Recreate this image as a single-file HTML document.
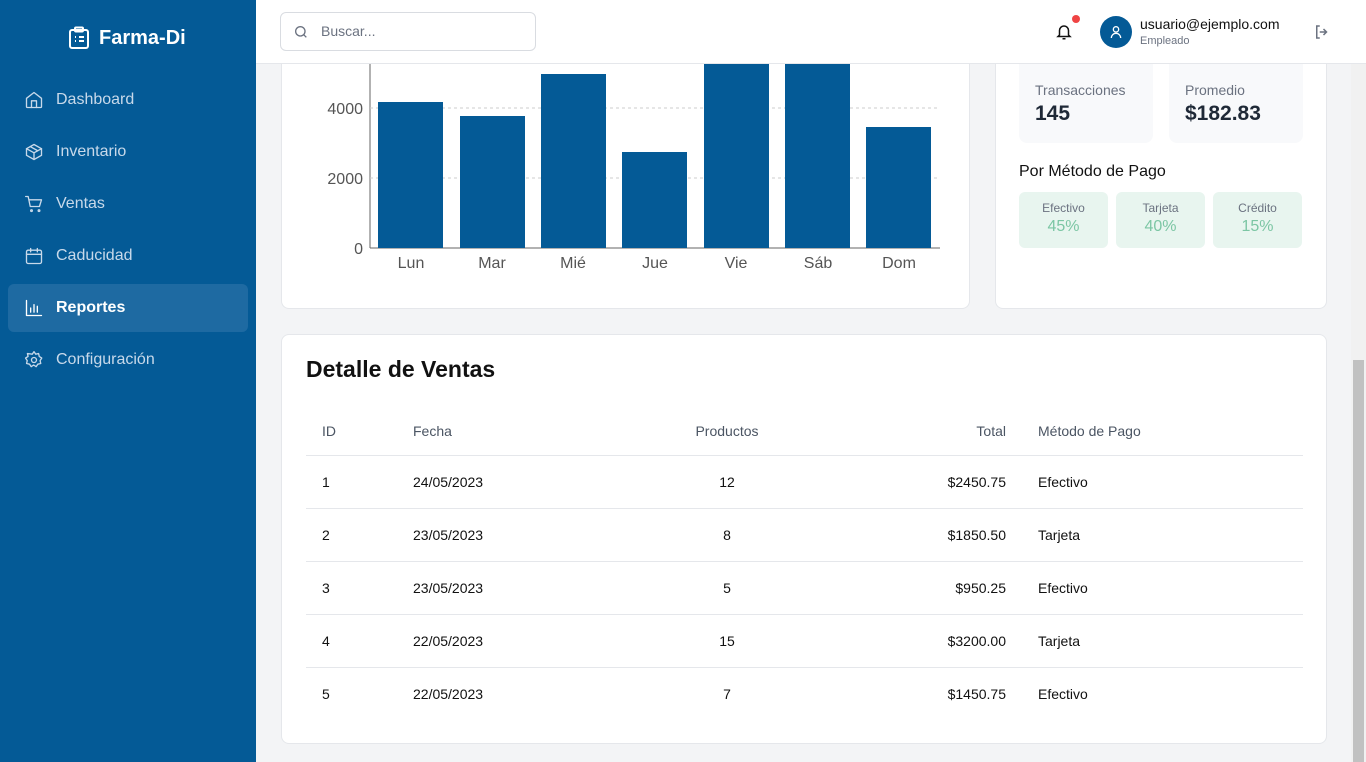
<!DOCTYPE html>
<html><head><meta charset="utf-8"><style>
*{box-sizing:border-box;margin:0;padding:0}
body{width:1366px;height:762px;overflow:hidden;background:#f3f4f6;font-family:"Liberation Sans",sans-serif;position:relative;color:#111}
.side{position:absolute;left:0;top:0;width:256px;height:762px;background:#045a96}
.logo{position:absolute;left:68px;top:26px;color:#fff;font-weight:bold;font-size:20px;display:flex;align-items:center;gap:9px}
.nav{position:absolute;left:8px;width:240px;height:48px;border-radius:6px;color:#c8d9ea;font-size:16px;display:flex;align-items:center;padding-left:16px;gap:12px}
.nav.act{background:#1e6aa2;color:#fff;font-weight:bold}
.nav svg{width:20px;height:20px;fill:none;stroke:currentColor;stroke-width:1.6;stroke-linecap:round;stroke-linejoin:round}
.top{position:absolute;left:256px;top:0;right:0;height:64px;background:#fff;border-bottom:1px solid #e5e7eb}
.search{position:absolute;left:24px;top:12px;width:256px;height:39px;border:1px solid #d9dce1;border-radius:6px;color:#6b7280;font-size:14px;padding:10px 0 0 40px}
.card{position:absolute;background:#fff;border:1px solid #e5e7eb;border-radius:8px}
.stat{position:absolute;top:64px;width:134px;height:79px;background:#f8f9fb;border-radius:0 0 8px 8px;padding:18px 16px}
.stat .l{font-size:14px;color:#6b7280}.stat .v{font-size:21px;font-weight:bold;color:#1f2937;margin-top:4px}
.pm{position:absolute;top:192px;width:89px;height:56px;background:#e8f5ef;border-radius:6px;text-align:center;padding-top:9px}
.pm .l{font-size:12px;color:#6b7280}.pm .v{font-size:16px;color:#7cc6a4;margin-top:3px}
table{position:absolute;left:24px;top:72px;width:997px;border-collapse:collapse;font-size:14px}
th{font-weight:normal;color:#4b5563;height:48px;text-align:left;padding-left:16px;border-bottom:1px solid #e5e7eb}
td{height:53px;padding-left:16px;border-bottom:1px solid #e5e7eb;color:#111}
tr:last-child td{border-bottom:none}
.c{text-align:center;padding:0}.r{text-align:right;padding:0 16px 0 0}
</style></head><body>
<div class="side">
<div class="logo"><svg width="22" height="24" viewBox="0 0 22 24" fill="none" stroke="#fff" stroke-width="2" stroke-linejoin="round"><rect x="2" y="4" width="18" height="18" rx="2"/><rect x="7" y="1.5" width="8" height="4" rx="1"/><path d="M7 11h1M11 11h5M7 15h1M11 15h5"/></svg>Farma-Di</div>
<div class="nav" style="top:76px"><svg viewBox="0 0 24 24"><path d="M3 10l9-7 9 7v10a1 1 0 0 1-1 1H4a1 1 0 0 1-1-1z"/><path d="M9 21v-8h6v8"/></svg>Dashboard</div>
<div class="nav" style="top:128px"><svg viewBox="0 0 24 24"><path d="M21 8l-9-5-9 5v8l9 5 9-5z"/><path d="M3 8l9 5 9-5M12 13v8M7.5 5.5l9 5"/></svg>Inventario</div>
<div class="nav" style="top:180px"><svg viewBox="0 0 24 24"><path d="M2 3h3l2.5 12h11L21 7H6"/><circle cx="9" cy="20" r="1"/><circle cx="18" cy="20" r="1"/></svg>Ventas</div>
<div class="nav" style="top:232px"><svg viewBox="0 0 24 24"><rect x="3" y="5" width="18" height="16" rx="2"/><path d="M3 10h18M8 3v4M16 3v4"/></svg>Caducidad</div>
<div class="nav act" style="top:284px"><svg viewBox="0 0 24 24"><path d="M3 3v18h18M8 17v-5M12 17V8M16 17v-7"/></svg>Reportes</div>
<div class="nav" style="top:336px"><svg viewBox="0 0 24 24"><circle cx="12" cy="12" r="3"/><path d="M12 2l2 3 3.5-.8.8 3.5 3 2-2 3 .8 3.5-3.5.8-2 3-3-2-3 2-2-3-3.5-.8.8-3.5-2-3 3-2-.8-3.5L10 5z"/></svg>Configuración</div>
</div>

<div class="card" style="left:281px;top:40px;width:689px;height:269px;border-top:none">
<svg width="689" height="269" style="position:absolute;left:-1px;top:0" font-family="Liberation Sans" font-size="16" fill="#555">
<line x1="89" y1="24" x2="89" y2="208" stroke="#666"/>
<line x1="89" y1="208" x2="659" y2="208" stroke="#666"/>
<line x1="89" y1="68" x2="659" y2="68" stroke="#ccc" stroke-dasharray="3 3"/>
<line x1="89" y1="138" x2="659" y2="138" stroke="#ccc" stroke-dasharray="3 3"/>
<g fill="#045a96"><rect x="97" y="62" width="65" height="146"/><rect x="179" y="76" width="65" height="132"/><rect x="260" y="34" width="65" height="174"/><rect x="341" y="112" width="65" height="96"/><rect x="423" y="10" width="65" height="198"/><rect x="504" y="10" width="65" height="198"/><rect x="585" y="87" width="65" height="121"/></g>
<g text-anchor="end"><text x="82" y="74">4000</text><text x="82" y="144">2000</text><text x="82" y="214">0</text></g>
<g text-anchor="middle"><text x="130" y="228">Lun</text><text x="211" y="228">Mar</text><text x="292" y="228">Mié</text><text x="374" y="228">Jue</text><text x="455" y="228">Vie</text><text x="537" y="228">Sáb</text><text x="618" y="228">Dom</text></g>
</svg></div>

<div class="card" style="left:995px;top:40px;width:332px;height:269px;border-top:none"></div>
<div class="stat" style="left:1019px"><div class="l">Transacciones</div><div class="v">145</div></div>
<div class="stat" style="left:1169px"><div class="l">Promedio</div><div class="v">$182.83</div></div>
<div style="position:absolute;left:1019px;top:163px;font-size:16px;color:#111">Por Método de Pago</div>
<div class="pm" style="left:1019px"><div class="l">Efectivo</div><div class="v">45%</div></div>
<div class="pm" style="left:1116px"><div class="l">Tarjeta</div><div class="v">40%</div></div>
<div class="pm" style="left:1213px"><div class="l">Crédito</div><div class="v">15%</div></div>

<div class="card" style="left:281px;top:334px;width:1046px;height:410px">
<div style="position:absolute;left:24px;top:21px;font-size:23px;font-weight:bold">Detalle de Ventas</div>
<table>
<tr><th style="width:91px">ID</th><th style="width:270px">Fecha</th><th class="c" style="width:120px">Productos</th><th class="r" style="width:235px">Total</th><th>Método de Pago</th></tr>
<tr><td>1</td><td>24/05/2023</td><td class="c">12</td><td class="r">$2450.75</td><td>Efectivo</td></tr>
<tr><td>2</td><td>23/05/2023</td><td class="c">8</td><td class="r">$1850.50</td><td>Tarjeta</td></tr>
<tr><td>3</td><td>23/05/2023</td><td class="c">5</td><td class="r">$950.25</td><td>Efectivo</td></tr>
<tr><td>4</td><td>22/05/2023</td><td class="c">15</td><td class="r">$3200.00</td><td>Tarjeta</td></tr>
<tr><td>5</td><td>22/05/2023</td><td class="c">7</td><td class="r">$1450.75</td><td>Efectivo</td></tr>
</table></div>

<div class="top">
<div class="search"><svg width="16" height="16" viewBox="0 0 24 24" fill="none" stroke="#6b7280" stroke-width="2" style="position:absolute;left:12px;top:11px"><circle cx="11" cy="11" r="7"/><path d="M20 20l-4-4"/></svg>Buscar...</div>
<svg width="18" height="18" viewBox="0 0 24 24" fill="none" stroke="#111" stroke-width="2" style="position:absolute;left:799px;top:23px"><path d="M6 16V10a6 6 0 0 1 12 0v6l2 2H4z"/><path d="M10 21h4"/></svg>
<div style="position:absolute;left:816px;top:15px;width:8px;height:8px;border-radius:50%;background:#ef4444"></div>
<div style="position:absolute;left:844px;top:16px;width:32px;height:32px;border-radius:50%;background:#045a96"><svg width="16" height="16" viewBox="0 0 24 24" fill="none" stroke="#fff" stroke-width="2" style="margin:8px"><circle cx="12" cy="8" r="4"/><path d="M5 21a7 7 0 0 1 14 0"/></svg></div>
<div style="position:absolute;left:884px;top:16px;font-size:14px;color:#111">usuario@ejemplo.com</div>
<div style="position:absolute;left:884px;top:35px;font-size:11px;color:#6b7280">Empleado</div>
<svg width="18" height="18" viewBox="0 0 24 24" fill="none" stroke="#6b7280" stroke-width="2" style="position:absolute;left:1057px;top:23px"><path d="M9 4H5v16h4M14 8l4 4-4 4M18 12H9"/></svg>
</div>
<div style="position:absolute;left:1351px;top:64px;width:15px;height:698px;background:#f1f1f1"><div style="position:absolute;left:2px;top:296px;width:11px;height:402px;background:#c1c1c1"></div></div>
</body></html>
